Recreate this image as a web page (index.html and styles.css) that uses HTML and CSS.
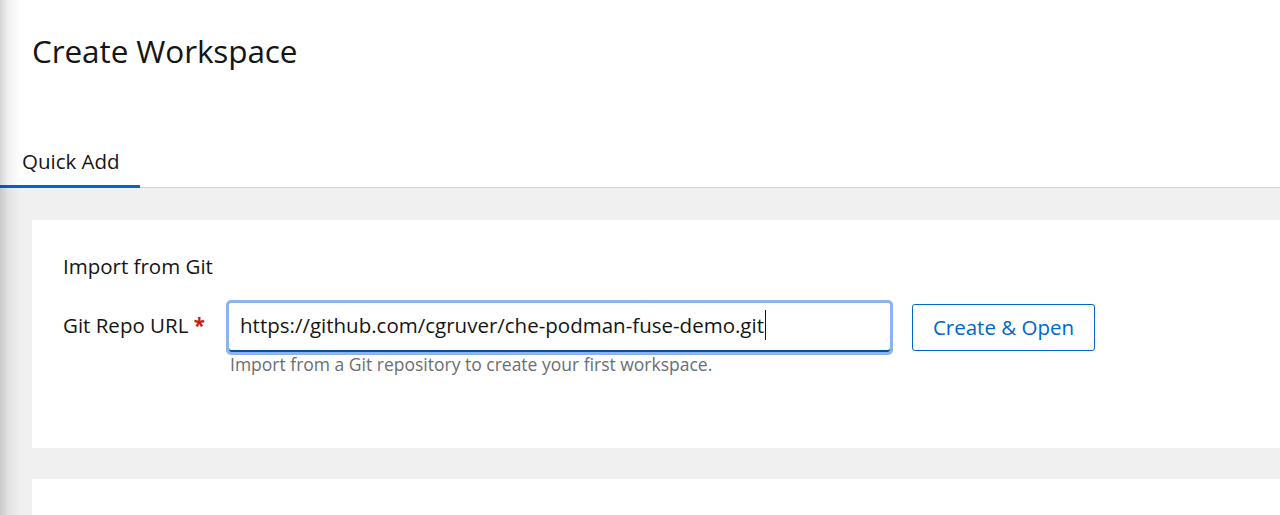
FILE: index.html
```html
<!DOCTYPE html>
<html>
<head>
<meta charset="utf-8">
<link rel="stylesheet" href="styles.css">
</head>
<body>
<div class="shadow"></div>
<div class="page">
  <header class="header">
    <h1 class="title">Create Workspace</h1>
  </header>
  <nav class="tabs">
    <div class="tab tab-active">Quick Add</div>
  </nav>
  <main class="content">
    <section class="card">
      <h2 class="card-title">Import from Git</h2>
      <div class="form-row">
        <label class="label">Git Repo URL <span class="req">*</span></label>
        <div class="field">
          <div class="input"><span class="input-text">https://github.com/cgruver/che-podman-fuse-demo.git</span><span class="caret"></span></div>
          <div class="helper">Import from a Git repository to create your first workspace.</div>
        </div>
        <button class="btn">Create &amp; Open</button>
      </div>
    </section>
    <section class="card card-2"></section>
  </main>
</div>
</body>
</html>
```
FILE: styles.css
```css
html, body {
  margin: 0;
  padding: 0;
  background: #ffffff;
  font-family: "Open Sans", "Liberation Sans", sans-serif;
  color: #151515;
  overflow: hidden;
}
.shadow {
  position: fixed;
  left: 0;
  top: 0;
  bottom: 0;
  width: 22px;
  background: linear-gradient(to right, rgba(0,0,0,0.16), rgba(0,0,0,0.05) 40%, rgba(0,0,0,0));
  z-index: 5;
}
.page {
  display: flex;
  flex-direction: column;
  height: 515px;
  overflow: hidden;
}
.header {
  flex-shrink: 0;
  padding: 31px 32px 0 32px;
  height: 114px;
  box-sizing: border-box;
}
.title {
  margin: 0;
  font-size: 31.5px;
  font-weight: 400;
  line-height: 40px;
  letter-spacing: -0.1px;
}
.tabs {
  flex-shrink: 0;
  display: flex;
  border-bottom: 1px solid #d2d2d2;
  height: 74px;
  box-sizing: border-box;
}
.tab {
  padding: 33px 0 0 22px;
  width: 140px;
  height: 74px;
  box-sizing: border-box;
  font-size: 20.5px;
  line-height: 28px;
  color: #151515;
}
.tab-active {
  border-bottom: 3px solid #0066cc;
  margin-bottom: -1px;
}
.content {
  flex: 1;
  min-height: 0;
  background: #f0f0f0;
  padding: 32px 0 0 32px;
  display: flex;
  flex-direction: column;
  gap: 31px;
}
.card {
  flex-shrink: 0;
  background: #ffffff;
  height: 228px;
  box-sizing: border-box;
  padding: 32px 31px;
}
.card-2 {
  flex: 1;
  height: auto;
  padding: 0;
}
.card-title {
  margin: 0;
  font-size: 20.5px;
  font-weight: 400;
  line-height: 28px;
}
.form-row {
  display: flex;
  align-items: flex-start;
  margin-top: 20px;
}
.label {
  width: 163px;
  flex-shrink: 0;
  font-size: 20.5px;
  line-height: 28px;
  padding-top: 11px;
}
.req {
  color: #c9190b;
  font-weight: 700;
}
.field {
  display: flex;
  flex-direction: column;
  width: 667px;
  flex-shrink: 0;
}
.input {
  height: 55px;
  box-sizing: border-box;
  border: 3px solid #8db2f0;
  border-radius: 5px;
  padding: 8px 12px 0 11px;
  display: flex;
  align-items: flex-start;
  box-shadow: inset 0 -2px 0 #0052a8;
  font-size: 20.5px;
  line-height: 28px;
}
.input-text {
  white-space: nowrap;
}
.caret {
  width: 1px;
  height: 30px;
  margin-top: -1px;
  background: #151515;
  margin-left: 1px;
}
.helper {
  margin-top: -1px;
  font-size: 17.5px;
  line-height: 20px;
  color: #6a6e73;
  padding-left: 4px;
}
.btn {
  flex-shrink: 0;
  margin-left: 19px;
  margin-top: 4px;
  height: 47px;
  width: 183px;
  padding: 0 0 2px 0;
  border: 1px solid #0066cc;
  border-radius: 3px;
  background: #ffffff;
  color: #0066cc;
  font-family: inherit;
  font-size: 20.5px;
  line-height: 28px;
}
```
